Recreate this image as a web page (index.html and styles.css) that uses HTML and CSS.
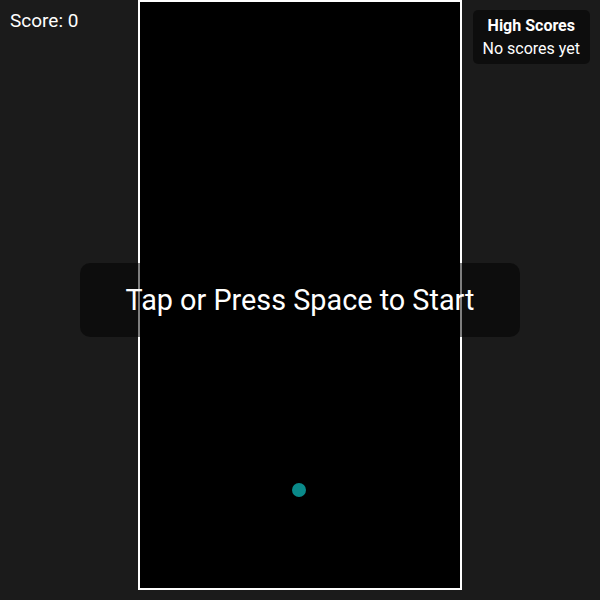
FILE: index.html
```html
<!DOCTYPE html>
<html>
<head>
<meta charset="utf-8">
<link rel="stylesheet" href="styles.css">
</head>
<body>
<div class="stage">
  <div class="board">
    <div class="ball"></div>
  </div>
</div>
<div class="score">Score: 0</div>
<div class="scores">
  <div class="scores-title">High Scores</div>
  <div class="scores-empty">No scores yet</div>
</div>
<div class="overlay">Tap or Press Space to Start</div>
</body>
</html>
```
FILE: styles.css
```css
html, body {
  margin: 0;
  padding: 0;
  height: 100%;
  background: #1b1b1b;
  font-family: Roboto, "Noto Sans", sans-serif;
  color: #fff;
  overflow: hidden;
}
.stage {
  display: flex;
  justify-content: center;
}
.board {
  position: relative;
  width: 320px;
  height: 586px;
  background: #000;
  border: 2px solid #fff;
}
.ball {
  position: absolute;
  left: 152px;
  top: 481px;
  width: 14px;
  height: 14px;
  border-radius: 50%;
  background: #0a8a8a;
}
.score {
  position: absolute;
  left: 10px;
  top: 9px;
  font-size: 19px;
  line-height: 24px;
}
.scores {
  position: absolute;
  right: 10px;
  top: 10px;
  padding: 4px 10px;
  background: rgba(0, 0, 0, 0.5);
  border-radius: 5px;
  font-size: 16px;
  line-height: 23px;
  text-align: center;
}
.scores-title {
  font-weight: bold;
}
.overlay {
  position: absolute;
  left: 80px;
  top: 263px;
  width: 440px;
  height: 74px;
  display: flex;
  align-items: center;
  justify-content: center;
  background: rgba(0, 0, 0, 0.5);
  border-radius: 10px;
  font-size: 28.8px;
}
```
